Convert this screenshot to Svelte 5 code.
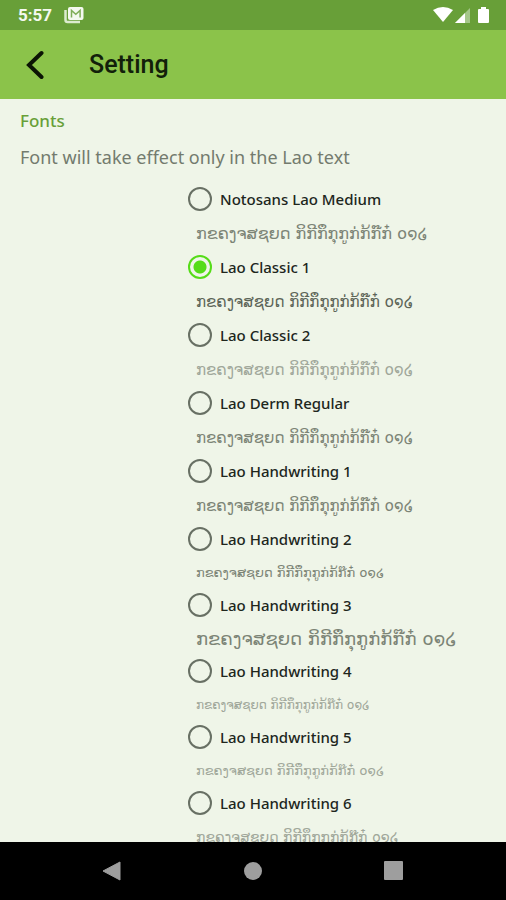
<script>
    const sample = "ກຂຄງຈສຊຍດ ກິກີກຶກຸກູກ່ກ້ກ໊ກ໋ ໐໑໒";

    const fonts = [
        { id: "noto", name: "Notosans Lao Medium", look: "large" },
        { id: "classic1", name: "Lao Classic 1", look: "medium dark" },
        { id: "classic2", name: "Lao Classic 2", look: "medium light" },
        { id: "derm", name: "Lao Derm Regular", look: "medium" },
        { id: "hand1", name: "Lao Handwriting 1", look: "medium" },
        { id: "hand2", name: "Lao Handwriting 2", look: "small short" },
        { id: "hand3", name: "Lao Handwriting 3", look: "wide short" },
        { id: "hand4", name: "Lao Handwriting 4", look: "tiny light short" },
        { id: "hand5", name: "Lao Handwriting 5", look: "small light short" },
        { id: "hand6", name: "Lao Handwriting 6", look: "normal light short" },
    ];

    let selected = $state("classic1");
</script>

<div class="screen">
    <div class="status">
        <span class="clock">5:57</span>
        <svg class="mail" width="20" height="18" viewBox="0 0 20 18">
            <path d="M1.5 4v10q0 2 2 2h12.500" fill="none" stroke="#dcebcf" stroke-width="2.500" />
            <rect x="4" y="1" width="15.500" height="13" rx="2" fill="#f4f9ef" />
            <path d="M7.500 11.500V4.500l4.300 3.800 4.300-3.800v7" fill="none" stroke="#7fad58" stroke-width="1.500" />
        </svg>
        <svg class="signals" width="58" height="18" viewBox="0 0 58 18">
            <path d="M0 4Q10-2 20 4L10 16z" fill="#fff" />
            <path d="M22 17L37 2v15z" fill="#a5c78a" />
            <path d="M22 17L32 7v10z" fill="#fff" />
            <path d="M46 3h2V1h5v2h2q1 0 1 1v12q0 1-1 1h-9q-1 0-1-1V4q0-1 1-1z" fill="#fff" />
        </svg>
    </div>

    <header>
        <button class="back" aria-label="Back">
            <svg width="20" height="30" viewBox="0 0 20 30">
                <path d="M17.500 3L5 15l12.500 12" fill="none" stroke="#0b1404" stroke-width="4" stroke-linecap="round" />
            </svg>
        </button>
        <h1>Setting</h1>
    </header>

    <main>
        <h2>Fonts</h2>
        <p class="hint">Font will take effect only in the Lao text</p>

        <div class="list" role="radiogroup" aria-label="Fonts">
            {#each fonts as font}
                <div>
                    <label>
                        <input type="radio" name="font" value={font.id} bind:group={selected} />
                        {font.name}
                    </label>
                    <p class="sample {font.look}" lang="lo">{sample}</p>
                </div>
            {/each}
        </div>
    </main>

    <nav>
        <button aria-label="Back">
            <svg width="20" height="20" viewBox="0 0 20 20">
                <path d="M1 10L18 1v18z" fill="#9e9e9e" stroke="#9e9e9e" stroke-linejoin="round" />
            </svg>
        </button>
        <button aria-label="Home">
            <svg width="20" height="20" viewBox="0 0 20 20">
                <circle cx="10" cy="10" r="9" fill="#9e9e9e" />
            </svg>
        </button>
        <button aria-label="Recent apps">
            <svg width="20" height="20" viewBox="0 0 20 20">
                <rect width="19" height="19" rx="1" fill="#9e9e9e" />
            </svg>
        </button>
    </nav>
</div>

<style>
    :global(body) {
        margin: 0;
        background: #000;
    }
    .screen {
        display: flex;
        flex-direction: column;
        height: 100vh;
        font-family: "Noto Sans", "DejaVu Sans", sans-serif;
        background: #eff5e8;
    }
    h1,
    h2,
    p {
        margin: 0;
    }
    button {
        padding: 0;
        border: 0;
        background: none;
        line-height: 0;
    }
    .status {
        display: flex;
        align-items: center;
        flex: none;
        height: 30px;
        padding: 0 15px 0 18px;
        background: #689f38;
    }
    .clock {
        font: 700 17px/32px Roboto, sans-serif;
        color: #f4f9ef;
    }
    .mail {
        margin-left: 12px;
    }
    .signals {
        margin-left: auto;
    }
    header {
        display: flex;
        align-items: center;
        flex: none;
        height: 69px;
        padding-left: 24px;
        background: #8bc34a;
    }
    .back {
        width: 65px;
        text-align: left;
    }
    h1 {
        font: 500 25px/32px Roboto, sans-serif;
        color: #12200a;
    }
    main {
        flex: 1;
        min-height: 0;
        overflow: hidden;
    }
    h2 {
        padding: 10px 20px 0;
        font-size: 17px;
        font-weight: 500;
        line-height: 24px;
        color: #689f38;
    }
    .hint {
        padding: 12px 20px 14px;
        font-size: 18px;
        line-height: 24px;
        color: #737b6e;
    }
    .list {
        padding-left: 188px;
    }
    label {
        display: flex;
        align-items: center;
        gap: 8px;
        height: 32px;
        font-size: 15px;
        font-weight: 500;
        color: #20261c;
    }
    input {
        appearance: none;
        box-sizing: border-box;
        width: 24px;
        height: 24px;
        margin: 0;
        border: 2px solid #687064;
        border-radius: 50%;
    }
    input:checked {
        border-color: #55dc18;
        background: radial-gradient(circle, #55dc18 6px, transparent 7px);
    }
    .sample {
        padding: 2px 0 0 8px;
        font-family: "DejaVu Sans", sans-serif;
        line-height: 34px;
        white-space: nowrap;
        color: #7c8476;
    }
    .short {
        line-height: 32px;
    }
    .wide {
        font-size: 18px;
    }
    .large {
        font-size: 16px;
    }
    .medium {
        font-size: 15px;
    }
    .normal {
        font-size: 14px;
    }
    .small {
        font-size: 13px;
    }
    .tiny {
        font-size: 12px;
    }
    .dark {
        color: #5c6457;
    }
    .light {
        color: #a0a79a;
    }
    nav {
        display: flex;
        align-items: center;
        justify-content: space-around;
        flex: none;
        height: 58px;
        padding: 0 42px;
        background: #000;
    }
</style>
